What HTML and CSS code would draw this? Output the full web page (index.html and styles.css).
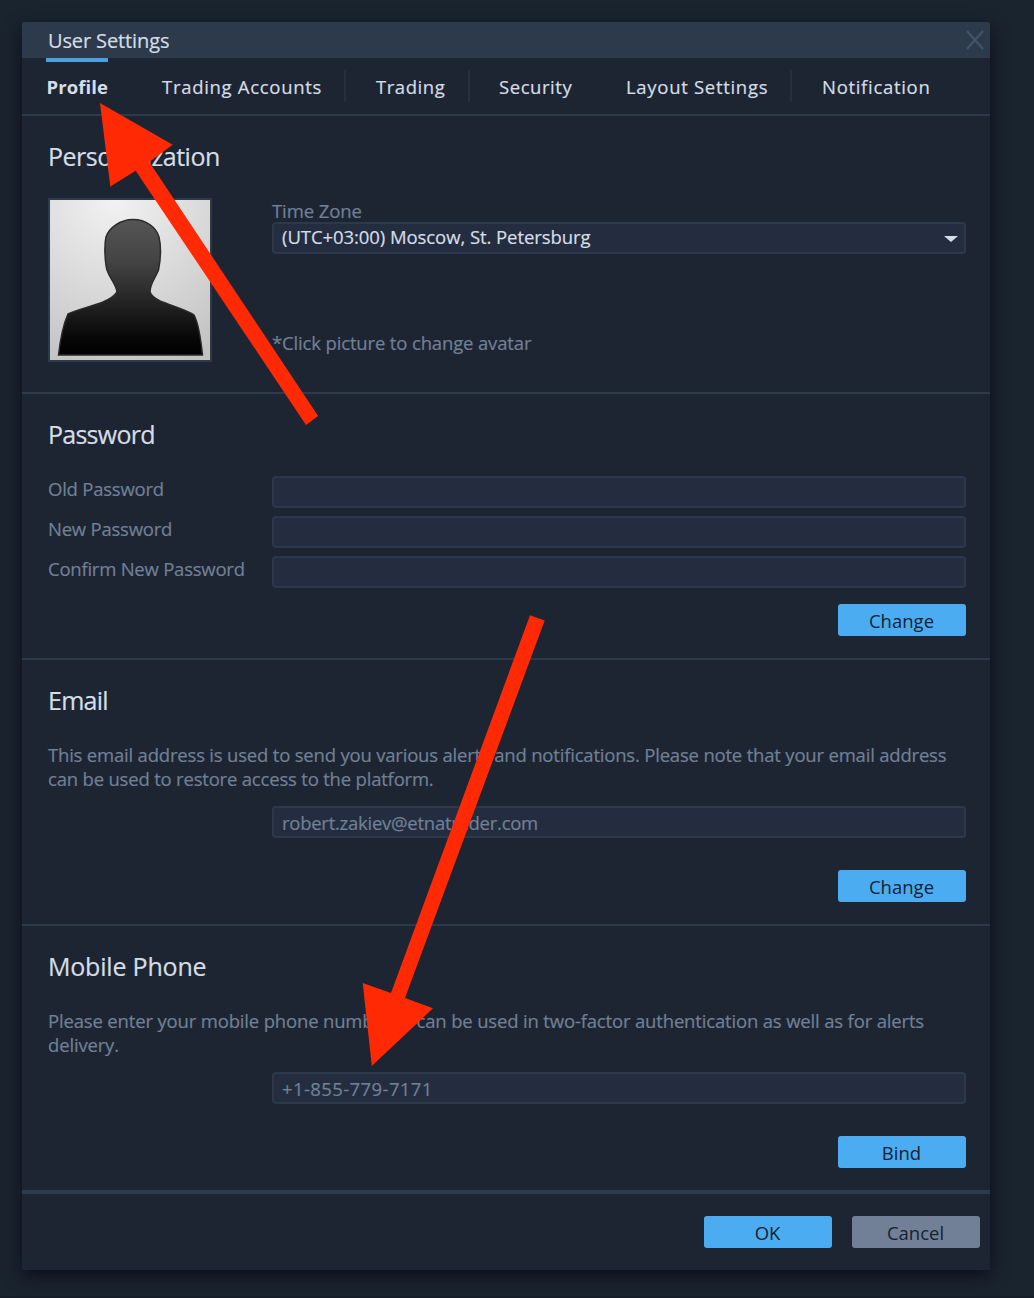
FILE: index.html
```html
<!DOCTYPE html>
<html lang="en">
<head>
<meta charset="utf-8">
<title>User Settings</title>
<link rel="stylesheet" href="styles.css">
</head>
<body>
<main class="dialog">
  <header class="titlebar">
    <h1 class="title">User Settings</h1>
    <svg class="close" width="18" height="20" viewBox="0 0 18 20"><path d="M1 1 17 19M17 1 1 19"/></svg>
  </header>
  <nav class="tabs">
    <a class="tab tab-profile">Profile</a>
    <a class="tab tab-accounts">Trading Accounts</a>
    <a class="tab tab-trading">Trading</a>
    <a class="tab tab-security">Security</a>
    <a class="tab tab-layout">Layout Settings</a>
    <a class="tab tab-notification">Notification</a>
  </nav>

  <section class="section personalization">
    <h2 class="heading">Personalization</h2>
    <div class="profile-row">
      <div class="avatar">
        <svg width="160" height="160" viewBox="0 0 160 160">
          <defs>
            <radialGradient id="backdrop" cx="0.4" cy="0" r="1.1">
              <stop offset="0" stop-color="#f2f2f2"/><stop offset="1" stop-color="#c2c2c2"/>
            </radialGradient>
            <linearGradient id="person" x1="0" y1="0" x2="0" y2="1">
              <stop offset="0" stop-color="#555"/><stop offset="0.3" stop-color="#444"/><stop offset="0.9" stop-color="#050505"/><stop offset="1" stop-color="#000"/>
            </linearGradient>
            <filter id="soft" color-interpolation-filters="sRGB"><feGaussianBlur stdDeviation="0.6"/></filter>
          </defs>
          <rect width="160" height="160" fill="url(#backdrop)"/>
          <path filter="url(#soft)" fill="url(#person)" stroke="#2a2a2a" stroke-width="1.500" d="M83 19.500C70 19.500 59 28 56 37C54 46 55 62 57 70C60 79 66 84 67 92C64 97 59 99.500 53 102C40 107 25 110 18 114C13 125 10 142 8.500 155H152.500C151 141 149 124 144 115C137 110 122 106 110 101C105 98.500 101 95 100 92C100 83 106 77 108.500 70C110.500 60 111 46 109 37C106 27 96 19.500 83 19.500Z"/>
        </svg>
      </div>
      <div class="profile-fields">
        <span class="label zone-label">Time Zone</span>
        <div class="field select"><span class="zone-value">(UTC+03:00) Moscow, St. Petersburg</span>
          <svg class="caret" width="14" height="6" viewBox="0 0 14 6"><path d="M0 0H14L7 6Z"/></svg>
        </div>
        <span class="label hint">*Click picture to change avatar</span>
      </div>
    </div>
  </section>

  <section class="section password">
    <h2 class="heading heading-tight">Password</h2>
    <div class="form-row"><span class="label">Old Password</span><div class="field"></div></div>
    <div class="form-row"><span class="label">New Password</span><div class="field"></div></div>
    <div class="form-row"><span class="label">Confirm New Password</span><div class="field"></div></div>
    <div class="actions"><button class="button">Change</button></div>
  </section>

  <section class="section">
    <h2 class="heading heading-tight">Email</h2>
    <p class="note">This email address is used to send you various alerts and notifications. Please note that your email address<br>can be used to restore access to the platform.</p>
    <div class="field contact-field">robert.zakiev@etnatrader.com</div>
    <div class="actions"><button class="button">Change</button></div>
  </section>

  <section class="section">
    <h2 class="heading heading-wide">Mobile Phone</h2>
    <p class="note note-phone">Please enter your mobile phone number. It can be used in two-factor authentication as well as for alerts<br>delivery.</p>
    <div class="field contact-field phone-field">+1-855-779-7171</div>
    <div class="actions"><button class="button">Bind</button></div>
  </section>

  <footer class="footer">
    <button class="button">OK</button>
    <button class="button cancel">Cancel</button>
  </footer>
</main>
<svg class="arrows" width="1034" height="1298" viewBox="0 0 1034 1298">
  <path d="M100 103 172.700 144.700 149.300 162 318.200 416 306 425 135.700 170.700 110.300 186.500Z"/>
  <path d="M371.800 1066 362.700 983 391 993 530 615.300 544.700 620.500 405 998 433 1008.300Z"/>
</svg>
</body>
</html>
```
FILE: styles.css
```css
* { box-sizing: border-box; }
body {
  margin: 0;
  height: 1298px;
  padding: 22px 44px 0 22px;
  background: #1a242f;
  border-bottom: 2px solid #161e29;
  font-family: "Open Sans", "Noto Sans", sans-serif;
  font-size: 18.500px;
  color: #d5dde6;
  -webkit-text-stroke: 0.200px currentColor;
  position: relative;
  overflow: hidden;
}
.dialog {
  width: 968px;
  height: 1248px;
  background: #1d2533;
  border-radius: 3px 3px 0 0;
  box-shadow: 0 6px 18px rgba(8, 8, 20, 0.75);
}
.titlebar {
  height: 36px;
  padding: 0 6px 0 26px;
  display: flex;
  align-items: center;
  justify-content: space-between;
  background: #2c3a4c;
  border-radius: 3px 3px 0 0;
}
.title { margin: 0; font-size: 20px; font-weight: 400; line-height: 36px; padding-top: 2px; letter-spacing: -0.120px; }
.close { fill: none; stroke: #43546a; stroke-width: 2.200; }
.tabs {
  height: 58px;
  display: flex;
  align-items: flex-start;
  padding: 0 0 0 24px;
  border-bottom: 2px solid #2c3a4c;
}
.tab { height: 32px; margin-top: 12px; line-height: 34px; white-space: nowrap; letter-spacing: 0.700px; }
.tab-profile {
  width: 62px;
  height: 44px;
  margin: 0 54px 0 0;
  padding: 8px 0 0 0.500px;
  border-top: 4px solid #4ca0de;
  font-weight: 700;
  letter-spacing: 0.100px;
  -webkit-text-stroke: 0;
}
.tab-accounts { width: 184px; border-right: 2px solid #242f3f; }
.tab-trading { width: 124px; padding-left: 30px; letter-spacing: 0.550px; border-right: 2px solid #242f3f; }
.tab-security { width: 127px; padding-left: 29px; letter-spacing: 0.550px; }
.tab-layout { width: 195px; padding-left: 29px; border-right: 2px solid #242f3f; }
.tab-notification { padding-left: 30px; }

.section { height: 266px; padding: 24px 24px 0 26px; border-bottom: 2px solid #2c3a4c; }
.personalization { height: 278px; }
.heading { margin: 0; height: 34px; font-size: 25px; font-weight: 400; line-height: 32px; white-space: nowrap; letter-spacing: -0.500px; }
.heading-tight { letter-spacing: -0.750px; }
.heading-wide { letter-spacing: -0.200px; }
.label, .note { color: #718096; white-space: nowrap; letter-spacing: -0.230px; }
.field {
  height: 32px;
  padding: 0 6px 0 8px;
  border: 2px solid #2b394b;
  border-radius: 4px;
  background: #232d3f;
  line-height: 28px;
}
.profile-row { display: flex; gap: 60px; margin-top: 24px; }
.avatar { width: 164px; height: 164px; border: 2px solid #2c3a4c; }
.avatar svg { display: block; }
.profile-fields { flex: 1; display: flex; flex-direction: column; }
.zone-label { height: 24px; line-height: 26px; letter-spacing: -0.100px; }
.select { display: flex; justify-content: space-between; align-items: center; letter-spacing: -0.070px; }
.zone-value { line-height: 26px; padding-bottom: 2px; }
.caret { fill: #d5dde6; margin-top: 2px; }
.hint { margin-top: 76px; line-height: 26px; letter-spacing: -0.150px; }

.form-row { display: grid; grid-template-columns: 224px 1fr; height: 32px; margin-bottom: 8px; }
.heading + .form-row { margin-top: 24px; }
.form-row .label { line-height: 26px; }
.actions { display: flex; justify-content: flex-end; margin-top: 32px; }
.password .actions { margin-top: 16px; }
.button {
  width: 128px;
  height: 32px;
  padding: 2px 1px 0 0;
  border: 0;
  border-radius: 3px;
  background: #4cacf2;
  color: #152231;
  font: inherit;
  line-height: 30px;
  -webkit-text-stroke: 0;
}
.note { margin: 25px 0 15px; line-height: 24px; letter-spacing: -0.195px; }
.note-phone { letter-spacing: -0.165px; }
.contact-field { margin-left: 224px; color: #718096; line-height: 30px; letter-spacing: -0.260px; }
.phone-field { letter-spacing: 0.400px; }
.footer {
  display: flex;
  justify-content: flex-end;
  gap: 20px;
  padding: 22px 10px 0 0;
  border-top: 2px solid #2c3a4c;
}
.cancel { background: #718096; }
.arrows { position: absolute; left: 0; top: 0; fill: #ff2a04; }
```
